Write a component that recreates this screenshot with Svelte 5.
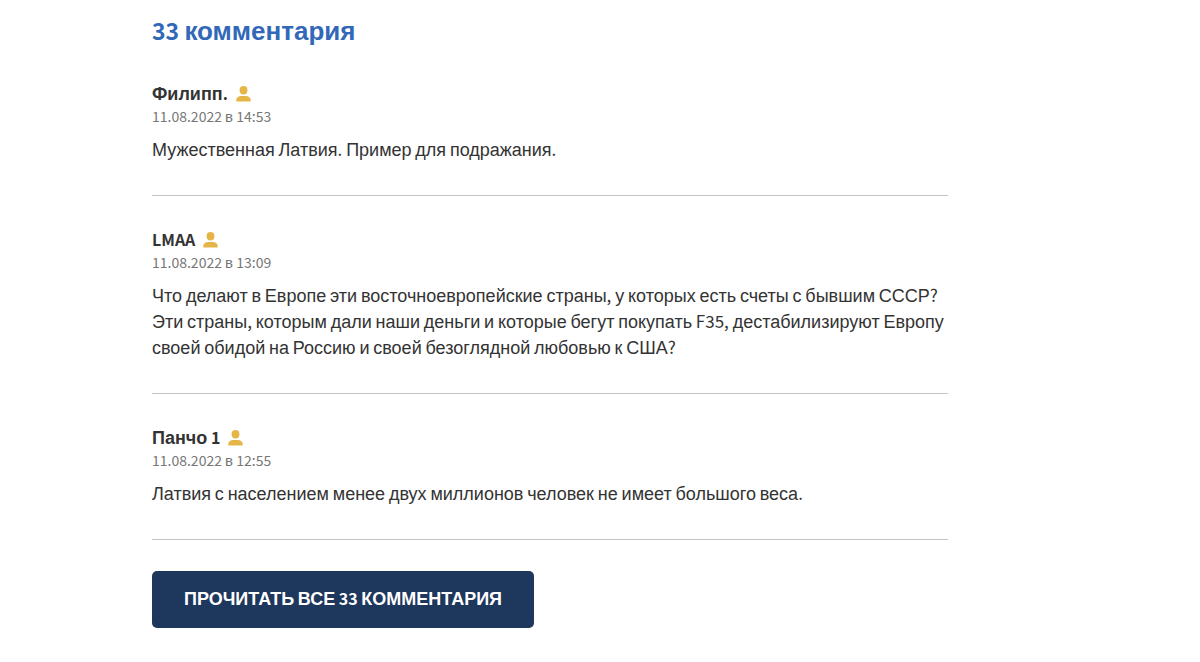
<script lang="ts">
  // Article comments: a short preview list with a button to load the rest.
  const total = 33

  const comments = [
    { author: 'Филипп.', date: '11.08.2022', time: '14:53', text: 'Мужественная Латвия. Пример для подражания.' },
    {
      author: 'LMAA',
      date: '11.08.2022',
      time: '13:09',
      text: 'Что делают в Европе эти восточноевропейские страны, у которых есть счеты с бывшим СССР? Эти страны, которым дали наши деньги и которые бегут покупать F35, дестабилизируют Европу своей обидой на Россию и своей безоглядной любовью к США?'
    },
    { author: 'Панчо 1', date: '11.08.2022', time: '12:55', text: 'Латвия с населением менее двух миллионов человек не имеет большого веса.' }
  ]

  // Cyrillic and everything else are set in two different families
  const runs = (s: string) => s.split(/([^А-Яа-яЁё]+)/).filter(Boolean)
  const isCyrillic = (s: string) => /[А-Яа-яЁё]/.test(s)
</script>

{#snippet mixed(s: string)}{#each runs(s) as run}{#if isCyrillic(run)}{run}{:else}<span class="latin">{run}</span>{/if}{/each}{/snippet}

<section class="comments">
  <h2 class="comments__title">{@render mixed(`${total} комментария`)}</h2>

  {#each comments as c}
    <article class="comment">
      <h3 class="comment__author">
        <span>{@render mixed(c.author)}</span>
        <svg class="comment__icon" viewBox="0 0 15 16" aria-hidden="true">
          <ellipse cx="7.5" cy="4.2" rx="3.9" ry="4.2" />
          <path d="M.3 15.4v-1.2c0-2.8 2.6-4.2 5.4-4.2h3.6c2.8 0 5.4 1.4 5.4 4.2v1.2z" />
        </svg>
      </h3>
      <p class="comment__date">{@render mixed(`${c.date} в ${c.time}`)}</p>
      <p class="comment__text">{@render mixed(c.text)}</p>
    </article>
  {/each}

  <button class="comments__more" type="button">{@render mixed(`Прочитать все ${total} комментария`)}</button>
</section>

<style>
  :global(body) {
    margin: 0;
    background: #fff;
  }
  .comments {
    box-sizing: border-box;
    max-width: 1100px;
    padding: 16px 152px 34px;
    font-family: 'Liberation Sans', Arial, sans-serif;
    color: #333;
  }
  .latin {
    font-family: 'Noto Sans CJK SC', sans-serif;
    font-size: 16px;
    line-height: 1;
  }
  .comments__title {
    margin: 0 0 38px;
    font-size: 26px;
    line-height: 30px;
    color: #3268b8;
  }
  .comments__title .latin {
    font-size: 23px;
  }
  .comment {
    padding-bottom: 32px;
    border-bottom: 1px solid #c4c4c4;
  }
  .comment + .comment {
    padding-top: 34px;
  }
  .comment__author {
    display: flex;
    align-items: center;
    gap: 8px;
    margin: 0;
    font-size: 18px;
    line-height: 20px;
  }
  .comment__icon {
    width: 15px;
    height: 16px;
    fill: #e5b547;
  }
  .comment__date {
    margin: 3px 0 10px;
    font-size: 15px;
    line-height: 20px;
    color: #777;
  }
  .comment__date .latin {
    font-size: 14px;
  }
  .comment__text {
    margin: 0;
    font-size: 18px;
    line-height: 26px;
  }
  .comment__text .latin {
    font-size: 17px;
  }
  .comments__more {
    margin-top: 31px;
    padding: 16px 32px;
    border: none;
    border-radius: 5px;
    background: #1e375c;
    color: #fff;
    font-family: inherit;
    font-size: 18px;
    font-weight: 700;
    line-height: 25px;
    text-transform: uppercase;
    cursor: pointer;
  }
</style>
